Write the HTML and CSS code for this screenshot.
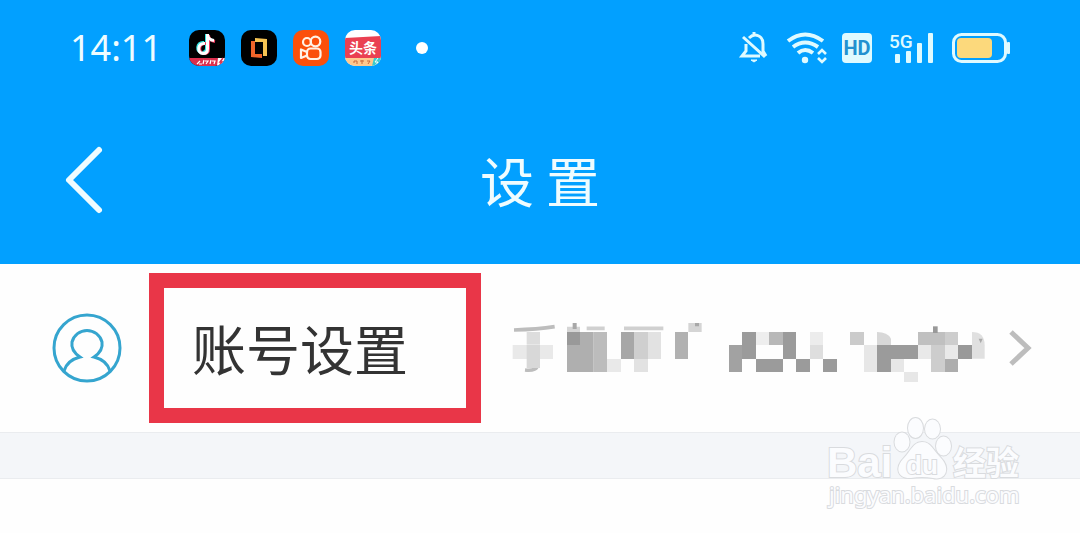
FILE: index.html
```html
<!DOCTYPE html>
<html lang="zh-CN">
<head>
<meta charset="utf-8">
<title>设置</title>
<link rel="stylesheet" href="styles.css">
</head>
<body>
<header class="top">
  <div class="status">
    <time class="clock">14:11</time>
    <div class="apps">
      <svg class="app" viewBox="0 0 36 36">
        <clipPath id="tile"><rect width="36" height="36" rx="10"/></clipPath>
        <g clip-path="url(#tile)">
          <rect width="36" height="36" fill="#000"/>
          <g fill="none" stroke-width="3">
            <path d="M16 13.500c-8-1-8 10-2 10c3 0 4.500-2 4.500-4.500V5c0 4 3 6 6.500 6.500" stroke="#35e6e2" transform="translate(-1 -1)"/>
            <path d="M16 13.500c-8-1-8 10-2 10c3 0 4.500-2 4.500-4.500V5c0 4 3 6 6.500 6.500" stroke="#f2375c" transform="translate(1 0)"/>
            <path d="M16 13.500c-8-1-8 10-2 10c3 0 4.500-2 4.500-4.500V4c0 4 3 6 6.500 6.500" stroke="#fff"/>
          </g>
          <path d="M0 28h36v8H0z" fill="#dc2f4d"/>
          <path d="M29 28h7v8h-8z" fill="#fff"/>
          <path d="M34 28l-3 4h2l-3 4" fill="none" stroke="#dc2f4d" stroke-width="1.500"/>
          <path d="M8 34l3-3M10 34h3M14 34l1-4M16 31h3l-2 3M21 34l1-4M23 31h3l-1 3" stroke="#fff" stroke-width="1.200" fill="none"/>
        </g>
      </svg>
      <svg class="app" viewBox="0 0 36 36">
        <rect width="36" height="36" rx="10" fill="#000"/>
        <path d="M10 11h4v13h7v4l-11-1z" fill="#f0642a"/>
        <path d="M14 8l12 1v17h-4V12h-8z" fill="#f6c453"/>
      </svg>
      <svg class="app" viewBox="0 0 36 36">
        <rect width="36" height="36" rx="10" fill="#fb500b"/>
        <g fill="none" stroke="#fff3e6" stroke-width="2.200">
          <circle cx="14" cy="12" r="4"/><circle cx="22.500" cy="11.500" r="4.800"/>
          <rect x="14" y="18.500" width="13.500" height="10.500" rx="3.500"/>
          <path d="M14 22l-6-2.500v8.500l6-2.500" stroke-linejoin="round"/>
        </g>
      </svg>
      <svg class="app" viewBox="0 0 36 36">
        <g clip-path="url(#tile)">
          <rect width="36" height="36" fill="#fff"/>
          <path d="M0 8l36-2v22H0z" fill="#ea4052"/>
          <path d="M0 28h36v8H0z" fill="#ffc98e"/>
          <path d="M29 28h7v8h-9z" fill="#38cdd0"/>
          <path d="M33 28l-3 4h3l-3 4" fill="none" stroke="#fff"/>
          <path d="M9 33v-2h3v3M15 31h4M17 30v4M22 31h3l-2 3" fill="none" stroke="#c9683a"/>
        </g>
        <text class="app-word" x="4" y="23">头条</text>
      </svg>
    </div>
    <span class="dot"></span>
    <div class="indicators">
      <svg class="bell" viewBox="0 0 28 32" fill="none" stroke="#dffaff" stroke-width="3">
        <path d="M6 12v7l-4 5h18M9 6c6-6 14-2 14 6v7l3 5M14 4V0M3 5l22 20"/>
        <path d="M11 28h6l-3 2z" fill="#dffaff" stroke-width="1"/>
      </svg>
      <svg class="wifi" viewBox="0 0 40 32" fill="none" stroke="#dffaff" stroke-width="4">
        <path d="M1 9q17-13 35 0M6 15q12-9 25 0M11 21q7-6 15 0"/>
        <circle cx="18" cy="28" r="3.200" fill="#dffaff" stroke="none"/>
        <path d="M31 22l4-4 4 4M31 26l4 4 4-4" stroke-width="2.600"/>
      </svg>
      <span class="hd">HD</span>
      <svg class="signal" viewBox="0 0 44 32">
        <text class="net" x="-1" y="16">5G</text>
        <g fill="#dffaff"><rect x="5" y="22" width="5" height="9" rx="1"/><rect x="16" y="19" width="5" height="12" rx="1"/><rect x="27" y="11" width="5" height="20" rx="1"/><rect x="38" y="1" width="5" height="30" rx="1"/></g>
      </svg>
      <svg class="battery" viewBox="0 0 58 32">
        <rect x="1.500" y="2.500" width="52" height="27" rx="8" fill="none" stroke="#dffaff" stroke-width="3"/>
        <rect x="5" y="6" width="35" height="20" rx="4" fill="#fcd97c"/>
        <rect x="55" y="10" width="3" height="12" rx="1" fill="#dffaff"/>
      </svg>
    </div>
  </div>
  <nav class="bar">
    <button class="back" aria-label="返回">
      <svg viewBox="0 0 40 68"><path d="M35 4L5 34l30 30" fill="none" stroke="#effcff" stroke-width="6" stroke-linecap="round" stroke-linejoin="round"/></svg>
    </button>
    <h1 class="title">设 置</h1>
  </nav>
</header>
<main>
  <a class="row" href="#account">
    <svg class="avatar" viewBox="0 0 70 70" fill="none" stroke="#35a5cf" stroke-width="3">
      <circle cx="35" cy="35" r="33"/>
      <path d="M12 58c2-7 8-12 16-14c-6-4-9-9-8-15a15.500 15.500 0 0 1 30 0c1 6-2 11-8 15c8 2 14 7 16 14"/>
    </svg>
    <span class="label">账号设置</span>
    <svg class="mosaic" viewBox="30 0 1440 240">
      <g fill="none" stroke="#bdbdbd" stroke-width="11">
        <path d="M42 66q70-2 122-10"/><path d="M75 186q38 4 38-18"/><path d="M260 61h54M372 61h118" stroke="#d0d0d0"/>
      </g>
      <path d="M80 72h40v38h-40z" fill="#ddd"/><path d="M38 111h121v42H38z" fill="#e9e9e9"/><path d="M80 111h40v69H80z" fill="#d8d8d8"/>
      <path d="M201 56h39v16h-39zM565 45h40v27h-40z" fill="#d5d5d5"/><path d="M218 45h12v18h-12zM585 45h12v10h-12z" fill="#a8a8a8"/>
      <path d="M201 72h39v39h-39z" fill="#999"/><path d="M240 72h41v39h-41zM201 111h80v81h-80z" fill="#afafaf"/><path d="M281 72h40v120h-40z" fill="#bcbcbc"/>
      <path d="M321 153h42v39h-42z" fill="#e9e9e9"/><path d="M363 72h39v81h-39z" fill="#a7a7a7"/><path d="M402 72h42v81h-42z" fill="#cfcfcf"/><path d="M444 72h39v81h-39zM402 153h42v39h-42z" fill="#e2e2e2"/>
      <path d="M525 72h39v81h-39z" fill="#b1b1b1"/>
      <path d="M687 111h39v81h-39z" fill="#a2a2a2"/><path d="M726 72h42v81h-42zM768 153h81v39h-81zM849 72h39v81h-39zM888 153h42v39h-42zM969 153h42v39h-42z" fill="#9b9b9b"/>
      <path d="M768 72h39v39h-39z" fill="#eee"/><path d="M807 72h42v39h-42z" fill="#b8b8b8"/><path d="M930 72h39v39h-39z" fill="#ececec"/><path d="M930 111h39v42h-39z" fill="#dedede"/>
      <path d="M1050 72h42v39h-42z" fill="#cbcbcb"/><path d="M1092 111h39v81h-39zM1173 153h39v39h-39zM1212 192h42v30h-42z" fill="#e7e7e7"/><path d="M1131 72q32 0 42 20v19h-42z" fill="#d8d8d8"/>
      <path d="M1131 111h123v42h-81v39h-42z" fill="#9b9b9b"/><path d="M1254 72h81v39h-81z" fill="#c0c0c0"/><path d="M1299 55h14v20h-14z" fill="#999"/>
      <path d="M1254 111h39v42h-39zM1335 111h39v42h-39z" fill="#e9e9e9"/><path d="M1293 111h42v81h-42zM1335 72h39v39h-39z" fill="#cdcdcd"/><path d="M1335 153h39v39h-39z" fill="#adadad"/><path d="M1374 111h42v42h-42z" fill="#999"/>
      <path d="M1416 72q38 0 38 40v40h-38z" fill="#e0e0e0"/><path d="M1436 92h12l-6 14z" fill="#aaa"/>
    </svg>
    <svg class="chevron" viewBox="0 0 24 36"><path d="M3 2l17 16L3 34" fill="none" stroke="#bdbdbd" stroke-width="5"/></svg>
  </a>
  <div class="divider"></div>
</main>
<svg class="watermark" viewBox="0 0 220 110">
  <g class="mark">
    <text class="bai" x="17" y="67">Bai</text>
    <ellipse cx="92" cy="32" rx="7.500" ry="9.500"/><ellipse cx="105.500" cy="18" rx="7.500" ry="10"/><ellipse cx="122.500" cy="19" rx="7.500" ry="9.500"/><ellipse cx="133.500" cy="36" rx="7.500" ry="9.500"/>
    <path d="M112 32c9 0 11 8 18 15c12 12 5 24-7 21q-11-2-22 0c-13 1-17-10-7-20c7-7 9-16 18-16z"/>
    <text class="du" x="96" y="64">du</text>
    <text class="exp" x="143" y="65">经验</text>
    <text class="url" x="19" y="93">jingyan.baidu.com</text>
  </g>
</svg>
</body>
</html>
```
FILE: styles.css
```css
body {
  margin: 0;
  min-height: 100vh;
  position: relative;
  background: #fefefe;
  font-family: "Noto Sans", "Noto Sans CJK SC", sans-serif;
}
svg { display: block; flex: none; overflow: visible; }
.top { background: #02a0ff; color: #effcff; }
.status {
  display: flex;
  align-items: center;
  height: 96px;
  padding: 0 70px;
}
.clock { font-size: 36px; line-height: 48px; width: 119px; }
.apps { display: flex; gap: 16px; }
.app { width: 36px; height: 36px; }
.app-word { font: 700 14px "Noto Sans CJK SC", sans-serif; fill: #fff; }
.dot { width: 12px; height: 12px; border-radius: 50%; background: #fff; margin-left: 35px; }
.indicators { display: flex; align-items: center; margin-left: auto; }
.bell { width: 28px; height: 32px; margin-right: 19px; }
.wifi { width: 40px; height: 32px; margin-right: 15px; }
.hd {
  width: 30px;
  margin-right: 18px;
  border-radius: 4px;
  background: #dffaff;
  color: #2391d0;
  font: 700 20px/30px Roboto, sans-serif;
  text-align: center;
}
.signal { width: 44px; height: 32px; margin-right: 18px; }
.net { font: 500 19px Roboto, sans-serif; fill: #dffaff; }
.battery { width: 58px; height: 32px; }
.bar {
  display: grid;
  grid-template-columns: 1fr auto 1fr;
  align-items: center;
  height: 168px;
  padding: 0 64px;
}
.back { justify-self: start; padding: 0; border: 0; background: none; }
.back svg { width: 40px; height: 68px; }
.title, .label { font: 400 54px/80px "Noto Sans CJK SC", sans-serif; }
.title { margin: 0; }
.row {
  display: flex;
  align-items: center;
  height: 168px;
  padding: 0 48px 0 52px;
  color: #333;
  text-decoration: none;
}
.avatar { width: 70px; height: 70px; margin-right: 27px; }
.label {
  box-sizing: border-box;
  width: 332px;
  padding: 20px 0 20px 28px;
  border: 15px solid #e93648;
}
.mosaic { width: 480px; height: 80px; margin-left: 29px; }
.chevron { width: 24px; height: 36px; margin-left: auto; }
.divider {
  height: 45px;
  background: #f4f6f9;
  border: 1px solid #eaecef;
  border-width: 1px 0;
}
.watermark {
  position: absolute;
  right: 50px;
  top: 410px;
  width: 220px;
  height: 110px;
}
.mark { fill: #fbfcfe; stroke: #d9dbde; stroke-width: 2px; paint-order: stroke; }
.bai { font: 700 42px "Liberation Sans", sans-serif; }
.du { font: 700 26px "Liberation Sans", sans-serif; }
.exp { font: 700 33px "Noto Sans CJK SC", sans-serif; }
.url { font: 400 22px "Noto Sans", sans-serif; }
```
